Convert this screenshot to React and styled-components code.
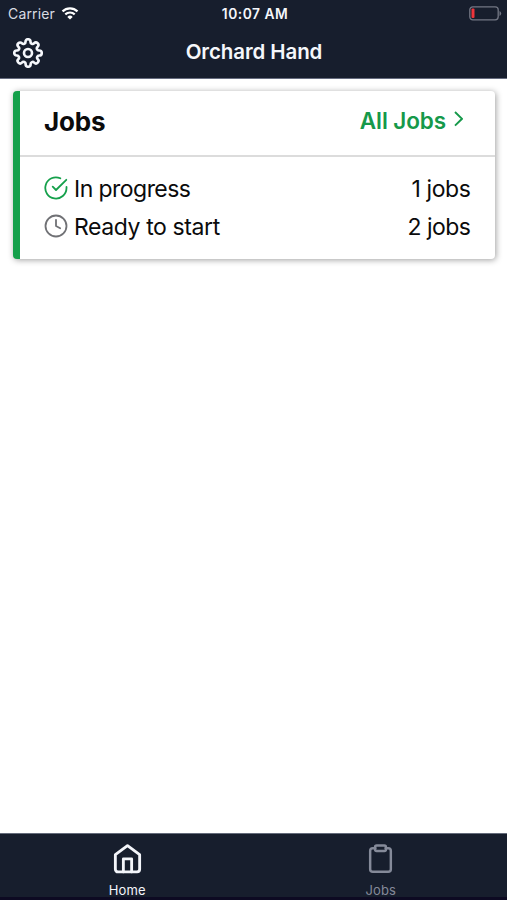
import React from "react";
import styled, { createGlobalStyle } from "styled-components";

const GlobalStyle = createGlobalStyle`
  * { box-sizing: border-box; }
  body { margin: 0; background: #fff; font-family: Inter, "Liberation Sans", sans-serif; }
`;

const Screen = styled.div`
  width: 507px;
  height: 900px;
  display: flex;
  flex-direction: column;
  overflow: hidden;
  background: #fff;
`;

const Header = styled.header`
  height: 79px;
  flex: none;
  background: #171e2d;
  border-bottom: 1px solid #666c7f;
  color: #f5f7fb;
`;

const StatusBar = styled.div`
  height: 28px;
  display: grid;
  grid-template-columns: 1fr auto 1fr;
  align-items: center;
  padding: 0 5px 0 8px;
`;

const Carrier = styled.div`
  display: flex;
  align-items: center;
  gap: 6px;
  color: #d9dce3;
`;

const Battery = styled.div`
  display: flex;
  justify-content: flex-end;
  padding-bottom: 2px;
`;

const TitleBar = styled.div`
  height: 50px;
  display: grid;
  grid-template-columns: 44px 1fr 43px;
  align-items: center;
  justify-items: center;
  padding-bottom: 1px;
`;

const IconButton = styled.button`
  display: flex;
  padding: 0;
  margin-left: 11px;
  border: 0;
  background: none;
  color: inherit;
`;

const Text = styled.span`
  font-size: ${(p) => p.$size}px;
  font-weight: ${(p) => p.$weight || 400};
  letter-spacing: ${(p) => p.$spacing || 0}px;
  margin-top: 0;
  margin-bottom: 0;
  line-height: 1.2;
  white-space: nowrap;
`;

const Content = styled.main`
  flex: 1;
  padding: 12px 12px 0 13px;
`;

const Card = styled.section`
  height: 168px;
  border-left: 7px solid #15a04b;
  border-radius: 4px;
  background: #fff;
  color: #0b0b0c;
  box-shadow: 1px 1px 6px rgba(0, 0, 0, 0.38);
`;

const CardHeader = styled.div`
  height: 66px;
  display: flex;
  align-items: center;
  justify-content: space-between;
  padding: 0 32px 3px 24px;
  border-bottom: 2px solid #dcdcdc;
`;

const CardLink = styled.a`
  display: flex;
  align-items: center;
  gap: 8px;
  padding-bottom: 2px;
  color: #16994a;

  svg { margin-top: -3px; }
`;

const JobList = styled.div`
  padding: 14px 24.5px 0 24px;
`;

const JobRow = styled.div`
  height: 38px;
  display: flex;
  align-items: center;
  justify-content: space-between;
`;

const JobStatus = styled.div`
  display: flex;
  align-items: center;
  gap: 6px;

  svg { color: ${(p) => p.$color}; margin-top: -4px; }
`;

const TabBar = styled.nav`
  height: 67px;
  flex: none;
  display: grid;
  grid-template-columns: 1fr 1fr;
  background: #171e2d;
  border-top: 1px solid #646b7a;
  border-bottom: 3px solid #0d0a22;
`;

const Tab = styled.a`
  display: flex;
  flex-direction: column;
  align-items: center;
  gap: 9px;
  padding: 9px 0 0 1px;
  color: ${(p) => (p.$active ? "#f3f5fa" : "#858a99")};
`;

const Icon = ({ size, stroke = 2, children }) => (
  <svg width={size} height={size} viewBox="0 0 24 24" fill="none" stroke="currentColor"
    strokeWidth={stroke} strokeLinecap="round" strokeLinejoin="round">
    {children}
  </svg>
);

const GearIcon = () => (
  <Icon size={30} stroke={2.1}>
    <circle cx="12" cy="12" r="3.2" />
    <path d="M19.4 15a1.65 1.65 0 0 0 .33 1.82l.06.06a2 2 0 0 1-2.83 2.83l-.06-.06a1.65 1.65 0 0 0-2.8 1.17V21a2 2 0 0 1-4 0v-.09a1.65 1.65 0 0 0-2.91-1.26l-.06.06a2 2 0 0 1-2.83-2.83l.06-.06A1.65 1.65 0 0 0 3.09 14H3a2 2 0 0 1 0-4h.09a1.65 1.65 0 0 0 1.26-2.91l-.06-.06a2 2 0 0 1 2.83-2.83l.06.06A1.65 1.65 0 0 0 10 3.09V3a2 2 0 0 1 4 0v.09a1.65 1.65 0 0 0 2.82 1.17l.06-.06a2 2 0 0 1 2.83 2.83l-.06.06A1.65 1.65 0 0 0 20.91 10H21a2 2 0 0 1 0 4h-.09a1.65 1.65 0 0 0-1.51 1z" />
  </Icon>
);

const CheckIcon = () => (
  <Icon size={24} stroke={1.8}>
    <path d="M22.5 11v1A10.600 10.600 0 1 1 16.300 2.300" />
    <path d="M22.300 3.800 12 14l-3.300-3.300" />
  </Icon>
);

const ClockIcon = () => (
  <Icon size={24} stroke={1.8}>
    <circle cx="12" cy="12" r="10.5" />
    <path d="M12 5.800V12l4.200 2.200" />
  </Icon>
);

const HomeIcon = () => (
  <Icon size={31} stroke={2.2}>
    <path d="M2.600 9 12 2l9.400 7v11.400a2 2 0 0 1-2 2H4.600a2 2 0 0 1-2-2z" />
    <path d="M8.800 22.400V12.300h6.400v10.100" />
  </Icon>
);

const ClipboardIcon = () => (
  <Icon size={31} stroke={1.9}>
    <path d="M16 4h2a2 2 0 0 1 2 2v14.300a2 2 0 0 1-2 2H6a2 2 0 0 1-2-2V6a2 2 0 0 1 2-2h2" />
    <rect x="7.800" y="2" width="8.400" height="4.200" rx="1.200" />
  </Icon>
);

const WifiIcon = () => (
  <svg width="18" height="13" viewBox="0 0 17 13" fill="none" stroke="#fff" strokeWidth="2.2">
    <path d="M1 4.400a10.800 10.800 0 0 1 15 0M3.800 7.400a6.800 6.800 0 0 1 9.400 0" />
    <path d="M8.500 12.500 5.800 9.900a3.900 3.900 0 0 1 5.400 0z" fill="#fff" stroke="none" />
  </svg>
);

const BatteryIcon = () => (
  <svg width="33" height="15" viewBox="0 0 33 15">
    <rect x=".8" y=".8" width="28.400" height="13" rx="3" fill="none" stroke="#737784" strokeWidth="1.300" />
    <rect x="2.500" y="2.500" width="3" height="9.500" rx="1" fill="#ee343b" />
    <path d="M30.500 5v5q1.700-.7 1.700-2.500T30.500 5" fill="#737784" />
  </svg>
);

export default function App() {
  return (
    <Screen>
      <GlobalStyle />
      <Header>
        <StatusBar>
          <Carrier><Text $size={14} $spacing={0.15}>Carrier</Text><WifiIcon /></Carrier>
          <Text $size={13.8} $weight={600} $spacing={0.5}>10:07 AM</Text>
          <Battery><BatteryIcon /></Battery>
        </StatusBar>
        <TitleBar>
          <IconButton aria-label="Settings"><GearIcon /></IconButton>
          <Text as="h1" $size={20.5} $weight={600} $spacing={-0.1}>Orchard Hand</Text>
        </TitleBar>
      </Header>
      <Content>
        <Card>
          <CardHeader>
            <Text as="h2" $size={26} $weight={700} $spacing={-0.2}>Jobs</Text>
            <CardLink>
              <Text $size={22.5} $weight={600} $spacing={-0.1}>All Jobs</Text>
              <svg width="9" height="16" viewBox="0 0 9 16" fill="none" stroke="currentColor" strokeWidth="1.900">
                <path d="m1 1 7 6.800L1 14.600" />
              </svg>
            </CardLink>
          </CardHeader>
          <JobList>
            <JobRow>
              <JobStatus $color="#15a04b"><CheckIcon /><Text $size={23} $spacing={-0.55}>In progress</Text></JobStatus>
              <Text $size={23} $spacing={-0.4}>1 jobs</Text>
            </JobRow>
            <JobRow>
              <JobStatus $color="#707175"><ClockIcon /><Text $size={23} $spacing={-0.4}>Ready to start</Text></JobStatus>
              <Text $size={23} $spacing={-0.5}>2 jobs</Text>
            </JobRow>
          </JobList>
        </Card>
      </Content>
      <TabBar>
        <Tab $active><HomeIcon /><Text $size={13} $spacing={0.1}>Home</Text></Tab>
        <Tab><ClipboardIcon /><Text $size={13} $spacing={0.1}>Jobs</Text></Tab>
      </TabBar>
    </Screen>
  );
}
